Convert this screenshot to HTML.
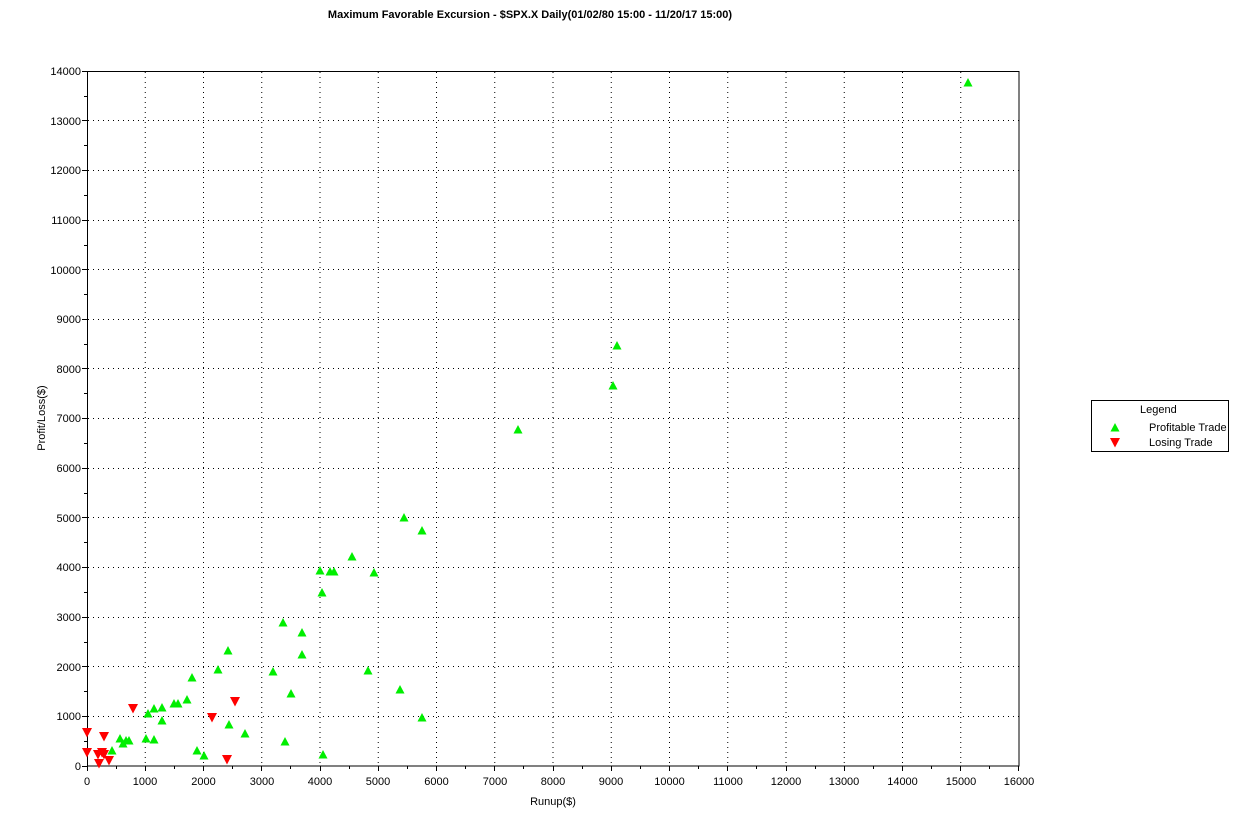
<!DOCTYPE html>
<html><head><meta charset="utf-8"><style>
html,body{margin:0;padding:0;background:#fff;width:1235px;height:834px;overflow:hidden}
svg text{font-family:"Liberation Sans",Arial,sans-serif;font-size:11px;fill:#000}
</style></head><body>
<svg width="1235" height="834" xmlns="http://www.w3.org/2000/svg">
<defs>
<polygon id="u" points="-4.5,3.5 4.5,3.5 0,-5" fill="#00ee00"/>
<polygon id="d" points="-5,-4 5,-4 0,5.5" fill="#ff0000"/>
</defs>
<text x="530" y="18" text-anchor="middle" style="font-weight:bold;font-size:11px">Maximum Favorable Excursion - $SPX.X Daily(01/02/80 15:00 - 11/20/17 15:00)</text>
<g stroke="#000" stroke-width="1" stroke-dasharray="1,4">
<line x1="145.25" y1="72" x2="145.25" y2="766"/><line x1="203.5" y1="72" x2="203.5" y2="766"/><line x1="261.75" y1="72" x2="261.75" y2="766"/><line x1="320" y1="72" x2="320" y2="766"/><line x1="378.25" y1="72" x2="378.25" y2="766"/><line x1="436.5" y1="72" x2="436.5" y2="766"/><line x1="494.75" y1="72" x2="494.75" y2="766"/><line x1="553" y1="72" x2="553" y2="766"/><line x1="611.25" y1="72" x2="611.25" y2="766"/><line x1="669.5" y1="72" x2="669.5" y2="766"/><line x1="727.75" y1="72" x2="727.75" y2="766"/><line x1="786" y1="72" x2="786" y2="766"/><line x1="844.25" y1="72" x2="844.25" y2="766"/><line x1="902.5" y1="72" x2="902.5" y2="766"/><line x1="960.75" y1="72" x2="960.75" y2="766"/>
<line x1="88" y1="716.5" x2="1019" y2="716.5"/><line x1="88" y1="666.5" x2="1019" y2="666.5"/><line x1="88" y1="617.5" x2="1019" y2="617.5"/><line x1="88" y1="567.5" x2="1019" y2="567.5"/><line x1="88" y1="517.5" x2="1019" y2="517.5"/><line x1="88" y1="468.5" x2="1019" y2="468.5"/><line x1="88" y1="418.5" x2="1019" y2="418.5"/><line x1="88" y1="368.5" x2="1019" y2="368.5"/><line x1="88" y1="319.5" x2="1019" y2="319.5"/><line x1="88" y1="269.5" x2="1019" y2="269.5"/><line x1="88" y1="220.5" x2="1019" y2="220.5"/><line x1="88" y1="170.5" x2="1019" y2="170.5"/><line x1="88" y1="120.5" x2="1019" y2="120.5"/>
</g>
<rect x="87.5" y="71.5" width="931.5" height="694.5" fill="none" stroke="#000" stroke-width="1"/>
<g stroke="#000" stroke-width="1">
<line x1="82" y1="766.5" x2="87" y2="766.5"/><line x1="84" y1="741.5" x2="87" y2="741.5"/><line x1="82" y1="716.5" x2="87" y2="716.5"/><line x1="84" y1="691.5" x2="87" y2="691.5"/><line x1="82" y1="666.5" x2="87" y2="666.5"/><line x1="84" y1="642.5" x2="87" y2="642.5"/><line x1="82" y1="617.5" x2="87" y2="617.5"/><line x1="84" y1="592.5" x2="87" y2="592.5"/><line x1="82" y1="567.5" x2="87" y2="567.5"/><line x1="84" y1="542.5" x2="87" y2="542.5"/><line x1="82" y1="517.5" x2="87" y2="517.5"/><line x1="84" y1="493.5" x2="87" y2="493.5"/><line x1="82" y1="468.5" x2="87" y2="468.5"/><line x1="84" y1="443.5" x2="87" y2="443.5"/><line x1="82" y1="418.5" x2="87" y2="418.5"/><line x1="84" y1="393.5" x2="87" y2="393.5"/><line x1="82" y1="368.5" x2="87" y2="368.5"/><line x1="84" y1="344.5" x2="87" y2="344.5"/><line x1="82" y1="319.5" x2="87" y2="319.5"/><line x1="84" y1="294.5" x2="87" y2="294.5"/><line x1="82" y1="269.5" x2="87" y2="269.5"/><line x1="84" y1="245.5" x2="87" y2="245.5"/><line x1="82" y1="220.5" x2="87" y2="220.5"/><line x1="84" y1="195.5" x2="87" y2="195.5"/><line x1="82" y1="170.5" x2="87" y2="170.5"/><line x1="84" y1="145.5" x2="87" y2="145.5"/><line x1="82" y1="120.5" x2="87" y2="120.5"/><line x1="84" y1="96.5" x2="87" y2="96.5"/><line x1="82" y1="71.5" x2="87" y2="71.5"/>
<line x1="87.5" y1="766" x2="87.5" y2="771"/><line x1="116.5" y1="766" x2="116.5" y2="769"/><line x1="145.5" y1="766" x2="145.5" y2="771"/><line x1="174.5" y1="766" x2="174.5" y2="769"/><line x1="203.5" y1="766" x2="203.5" y2="771"/><line x1="232.5" y1="766" x2="232.5" y2="769"/><line x1="261.5" y1="766" x2="261.5" y2="771"/><line x1="290.5" y1="766" x2="290.5" y2="769"/><line x1="320.5" y1="766" x2="320.5" y2="771"/><line x1="349.5" y1="766" x2="349.5" y2="769"/><line x1="378.5" y1="766" x2="378.5" y2="771"/><line x1="407.5" y1="766" x2="407.5" y2="769"/><line x1="436.5" y1="766" x2="436.5" y2="771"/><line x1="465.5" y1="766" x2="465.5" y2="769"/><line x1="494.5" y1="766" x2="494.5" y2="771"/><line x1="523.5" y1="766" x2="523.5" y2="769"/><line x1="553.5" y1="766" x2="553.5" y2="771"/><line x1="582.5" y1="766" x2="582.5" y2="769"/><line x1="611.5" y1="766" x2="611.5" y2="771"/><line x1="640.5" y1="766" x2="640.5" y2="769"/><line x1="669.5" y1="766" x2="669.5" y2="771"/><line x1="698.5" y1="766" x2="698.5" y2="769"/><line x1="727.5" y1="766" x2="727.5" y2="771"/><line x1="756.5" y1="766" x2="756.5" y2="769"/><line x1="786.5" y1="766" x2="786.5" y2="771"/><line x1="815.5" y1="766" x2="815.5" y2="769"/><line x1="844.5" y1="766" x2="844.5" y2="771"/><line x1="873.5" y1="766" x2="873.5" y2="769"/><line x1="902.5" y1="766" x2="902.5" y2="771"/><line x1="931.5" y1="766" x2="931.5" y2="769"/><line x1="960.5" y1="766" x2="960.5" y2="771"/><line x1="989.5" y1="766" x2="989.5" y2="769"/><line x1="1018.5" y1="766" x2="1018.5" y2="771"/>
</g>
<g text-anchor="end">
<text x="81" y="770">0</text><text x="81" y="720">1000</text><text x="81" y="671">2000</text><text x="81" y="621">3000</text><text x="81" y="571">4000</text><text x="81" y="522">5000</text><text x="81" y="472">6000</text><text x="81" y="422">7000</text><text x="81" y="373">8000</text><text x="81" y="323">9000</text><text x="81" y="274">10000</text><text x="81" y="224">11000</text><text x="81" y="174">12000</text><text x="81" y="125">13000</text><text x="81" y="75">14000</text>
</g>
<g text-anchor="middle">
<text x="87" y="785">0</text><text x="145" y="785">1000</text><text x="203.5" y="785">2000</text><text x="262" y="785">3000</text><text x="320" y="785">4000</text><text x="378" y="785">5000</text><text x="436.5" y="785">6000</text><text x="495" y="785">7000</text><text x="553" y="785">8000</text><text x="611" y="785">9000</text><text x="669.5" y="785">10000</text><text x="728" y="785">11000</text><text x="786" y="785">12000</text><text x="844" y="785">13000</text><text x="902.5" y="785">14000</text><text x="961" y="785">15000</text><text x="1019" y="785">16000</text>
<text x="553" y="805">Runup($)</text>
<text x="0" y="0" transform="translate(45,418) rotate(-90)">Profit/Loss($)</text>
</g>
<g>
<use href="#u" x="968" y="83"/><use href="#u" x="617" y="346"/><use href="#u" x="613" y="386"/><use href="#u" x="518" y="430"/><use href="#u" x="404" y="518"/><use href="#u" x="422" y="531"/><use href="#u" x="352" y="557"/><use href="#u" x="320" y="571"/><use href="#u" x="330" y="572"/><use href="#u" x="334" y="572"/><use href="#u" x="374" y="573"/><use href="#u" x="322" y="593"/><use href="#u" x="283" y="623"/><use href="#u" x="302" y="633"/><use href="#u" x="302" y="655"/><use href="#u" x="228" y="651"/><use href="#u" x="273" y="672"/><use href="#u" x="218" y="670"/><use href="#u" x="368" y="671"/><use href="#u" x="192" y="678"/><use href="#u" x="291" y="694"/><use href="#u" x="187" y="700"/><use href="#u" x="400" y="690"/><use href="#u" x="422" y="718"/><use href="#u" x="174" y="704"/><use href="#u" x="178" y="704"/><use href="#u" x="162" y="708"/><use href="#u" x="154" y="709"/><use href="#u" x="148" y="714"/><use href="#u" x="162" y="721"/><use href="#u" x="229" y="725"/><use href="#u" x="245" y="734"/><use href="#u" x="126" y="741"/><use href="#u" x="120" y="739"/><use href="#u" x="129" y="741"/><use href="#u" x="146" y="739"/><use href="#u" x="154" y="740"/><use href="#u" x="285" y="742"/><use href="#u" x="123" y="744"/><use href="#u" x="112" y="751"/><use href="#u" x="197" y="751"/><use href="#u" x="204" y="756"/><use href="#u" x="323" y="755"/>
<use href="#d" x="87" y="732"/><use href="#d" x="87" y="752"/><use href="#d" x="104" y="736"/><use href="#d" x="133" y="708"/><use href="#d" x="98" y="754"/><use href="#d" x="102" y="752"/><use href="#d" x="104" y="754"/><use href="#d" x="99" y="763"/><use href="#d" x="109" y="760"/><use href="#d" x="212" y="717"/><use href="#d" x="235" y="701"/><use href="#d" x="227" y="759"/>
</g>
<rect x="1091.5" y="400.5" width="137" height="51" fill="#fff" stroke="#000"/>
<text x="1140" y="413">Legend</text>
<use href="#u" x="1115" y="428"/>
<use href="#d" x="1115" y="442"/>
<text x="1149" y="431">Profitable Trade</text>
<text x="1149" y="446">Losing Trade</text>
</svg>
</body></html>
